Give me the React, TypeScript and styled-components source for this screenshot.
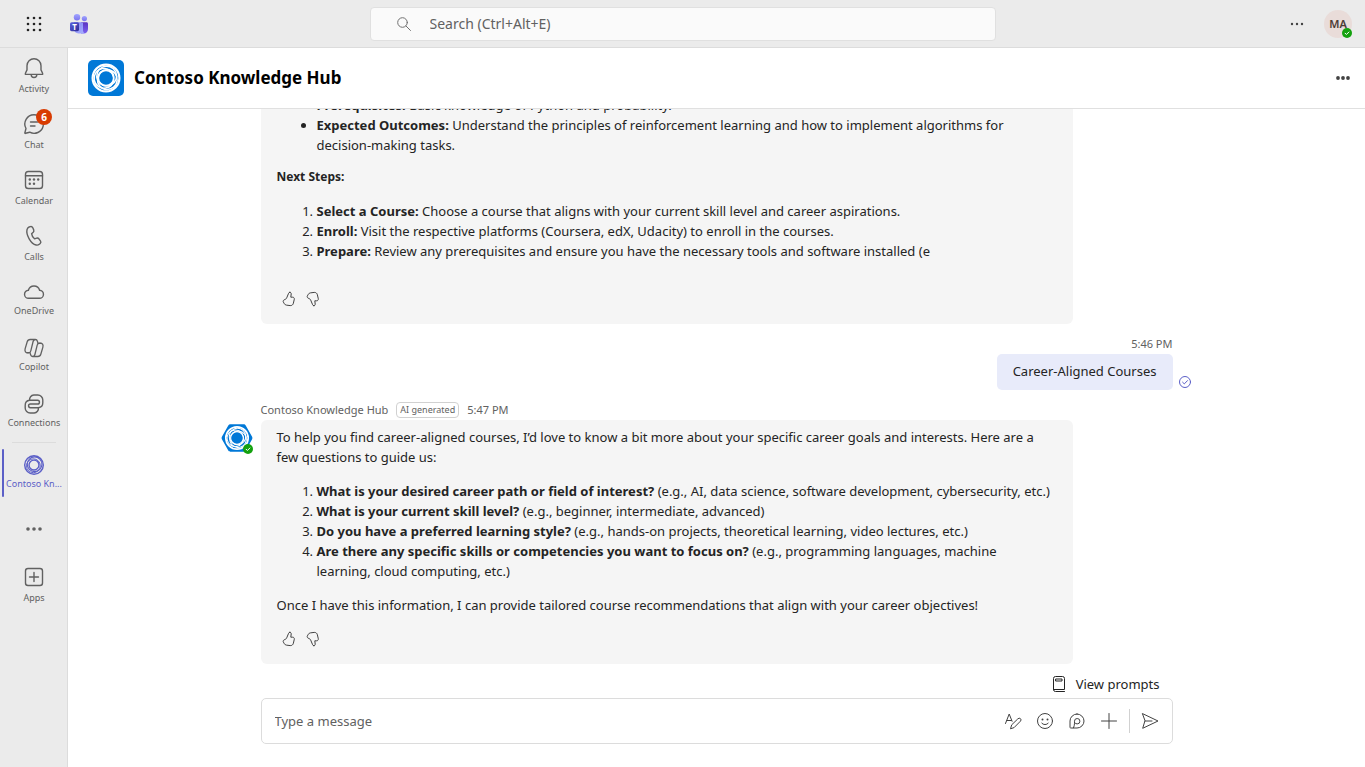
import React from "react";
import styled, { createGlobalStyle, css } from "styled-components";

const Global = createGlobalStyle`
  *, *::before, *::after { box-sizing: border-box; }
  body {
    margin: 0;
    background: #fff;
    color: #242424;
    font-family: "Segoe UI", "Noto Sans", "Open Sans", sans-serif;
    font-size: 13px;
    line-height: 20px;
  }
  button, input { font: inherit; color: inherit; }
`;

const plainButton = css`
  display: flex;
  align-items: center;
  justify-content: center;
  padding: 0;
  border: 0;
  background: none;
  cursor: pointer;
`;

/* ---------- shell ---------- */

const Shell = styled.div`
  display: grid;
  grid-template-columns: 68px minmax(0, 1fr);
  grid-template-rows: 48px minmax(0, 1fr);
  height: 100vh;
`;

const TopBar = styled.header`
  grid-column: 1 / -1;
  display: grid;
  grid-template-columns: 1fr minmax(0, 626px) 1fr;
  align-items: center;
  background: #ebebeb;
  border-bottom: 1px solid #dcdcdc;
`;

const TopStart = styled.div`
  display: flex;
  align-items: center;
  gap: 1px;
`;

const TopEnd = styled.div`
  display: flex;
  align-items: center;
  justify-content: flex-end;
  gap: 11px;
  padding-right: 13px;
`;

const IconButton = styled.button<{ $w?: number; $h?: number; $tone?: string }>`
  ${plainButton}
  width: ${p => p.$w ?? 32}px;
  height: ${p => p.$h ?? 32}px;
  color: ${p => p.$tone ?? "#424242"};
`;

const SearchBox = styled.label`
  display: flex;
  align-items: center;
  gap: 18px;
  height: 34px;
  padding-left: 25px;
  border: 1px solid #e0e0e0;
  border-radius: 4px;
  background: #fafafa;
  color: #707070;
`;

const SearchInput = styled.input`
  flex: 1;
  min-width: 0;
  padding: 0;
  border: 0;
  outline: 0;
  background: none;
  font-size: 14px;
  &::placeholder { color: #616161; opacity: 1; }
`;

const Profile = styled.button`
  ${plainButton}
  position: relative;
  width: 28px;
  height: 28px;
  border-radius: 50%;
  background: #e9dcd9;
  color: #4d3b36;
  font-size: 11px;
  font-weight: 600;
`;

const Presence = styled.span`
  position: absolute;
  right: 0;
  bottom: 0;
  display: flex;
  width: 10px;
  height: 10px;
`;

/* ---------- left rail ---------- */

const Rail = styled.nav`
  display: flex;
  flex-direction: column;
  background: #ebebeb;
  border-right: 1px solid #dcdcdc;
  overflow: hidden;
`;

const RailItem = styled.button<{ $active?: boolean; $tight?: boolean }>`
  ${plainButton}
  position: relative;
  flex-direction: column;
  justify-content: flex-start;
  gap: ${p => (p.$tight ? 0 : 2)}px;
  flex: none;
  height: 56px;
  padding: 8px 0 0 1px;
  color: ${p => (p.$active ? "#5b5fc7" : "#616161")};
  ${p => p.$active && css`
    &::before {
      content: "";
      position: absolute;
      left: 2px;
      top: 4px;
      width: 2px;
      height: 48px;
      border-radius: 1px;
      background: #5b5fc7;
    }
  `}
`;

const RailLabel = styled.span`
  font-size: 9px;
  line-height: 14px;
  white-space: nowrap;
`;

const RailRule = styled.hr`
  flex: none;
  width: 44px;
  height: 1px;
  margin: 2px auto;
  border: 0;
  background: #dcdcdc;
`;

const Badge = styled.span`
  position: absolute;
  top: 5px;
  left: 36px;
  width: 16px;
  height: 16px;
  border-radius: 50%;
  background: #d83b01;
  color: #fff;
  font-size: 10px;
  font-weight: 700;
  line-height: 16px;
  text-align: center;
`;

/* ---------- conversation ---------- */

const Main = styled.main`
  display: flex;
  flex-direction: column;
  min-width: 0;
  min-height: 0;
`;

const ChatHeader = styled.div`
  display: flex;
  align-items: center;
  gap: 10px;
  flex: none;
  height: 61px;
  padding: 0 6px 0 20px;
  border-bottom: 1px solid #e0e0e0;
`;

const ChatTitle = styled.h1`
  flex: 1;
  margin: 0;
  color: #000;
  font-size: 17px;
  line-height: 24px;
  font-weight: 700;
`;

const Thread = styled.section`
  flex: 1;
  display: flex;
  flex-direction: column;
  justify-content: flex-end;
  min-height: 0;
  overflow: hidden;
`;

const Column = styled.div`
  display: flex;
  flex-direction: column;
  gap: 12px;
  width: 100%;
  max-width: 992px;
  margin: 0 auto;
  padding: 0 40px 8px;
`;

const BotRow = styled.article`
  display: grid;
  grid-template-columns: 40px minmax(0, 812px);
  row-gap: 2px;
  margin-left: -40px;
`;

const Meta = styled.div`
  grid-column: 2;
  display: flex;
  align-items: center;
  height: 16px;
  color: #616161;
  font-size: 11px;
  line-height: 16px;
  white-space: nowrap;
`;

const Chip = styled.span`
  margin: 0 8px;
  padding: 0 3px;
  border: 1px solid #d1d1d1;
  border-radius: 4px;
  font-size: 9px;
  line-height: 14px;
`;

const BotAvatar = styled.div`
  grid-column: 1;
  position: relative;
  width: 32px;
  height: 32px;
  margin-top: 2px;
`;

const Bubble = styled.div`
  grid-column: 2;
  padding: 7px 16px 13px;
  border-radius: 6px;
  background: #f5f5f5;
  p { margin: 0 0 14px; }
  p:last-of-type { margin-bottom: 0; }
  h2 { margin: 0 0 14px; font-size: 12px; line-height: 20px; font-weight: 700; }
  ul, ol { margin: 0 0 14px; padding-left: 40px; }
  ul { margin-bottom: 12px; }
  strong { font-weight: 700; }
`;

const Feedback = styled.div<{ $gap: number }>`
  display: flex;
  margin-top: ${p => p.$gap}px;
`;

const OwnRow = styled.article`
  display: flex;
  flex-direction: column;
  align-items: flex-end;
  gap: 2px;
`;

const OwnLine = styled.div`
  display: flex;
  align-items: flex-end;
  gap: 6px;
  margin-right: -18px;
`;

const OwnBubble = styled.div`
  padding: 7px 16px 9px;
  border-radius: 5px;
  background: #e8ebfa;
`;

const Sent = styled.span`
  display: flex;
  height: 14px;
  color: #5b5fc7;
`;

const Footer = styled.div`
  display: flex;
  flex-direction: column;
  flex: none;
  gap: 2px;
  width: 100%;
  max-width: 992px;
  margin: 0 auto;
  padding: 0 40px 23px;
`;

const Prompts = styled.button`
  ${plainButton}
  align-self: flex-end;
  gap: 7px;
  height: 24px;
  margin-right: 13px;
`;

const Composer = styled.form`
  display: flex;
  align-items: center;
  height: 46px;
  padding: 0 6px 0 13px;
  border: 1px solid #dcdcdc;
  border-radius: 5px;
`;

const MessageInput = styled.input`
  flex: 1;
  min-width: 0;
  padding: 0;
  border: 0;
  outline: 0;
  background: none;
  &::placeholder { color: #616161; opacity: 1; }
`;

const Divider = styled.span`
  width: 1px;
  height: 24px;
  margin: 0 4px;
  background: #d1d1d1;
`;

/* ---------- drawings ---------- */

const Glyph = ({ size = 24, box = 24, w = 1.4, children }: { size?: number; box?: number; w?: number; children: React.ReactNode }) => (
  <svg width={size} height={size} viewBox={`0 0 ${box} ${box}`} fill="none" stroke="currentColor" strokeWidth={w} strokeLinecap="round" strokeLinejoin="round" aria-hidden="true">
    {children}
  </svg>
);

const Dots = ({ r = 1.6, step = 5 }: { r?: number; step?: number }) => (
  <svg width="20" height="20" viewBox="0 0 20 20" fill="currentColor" aria-hidden="true">
    <circle cx={10 - step} cy="10" r={r} />
    <circle cx="10" cy="10" r={r} />
    <circle cx={10 + step} cy="10" r={r} />
  </svg>
);

const Waffle = () => (
  <svg width="20" height="20" viewBox="0 0 20 20" fill="currentColor" aria-hidden="true">
    {[4, 10, 16].map(y => [4, 10, 16].map(x => <circle key={`${x}-${y}`} cx={x} cy={y} r="1.3" />))}
  </svg>
);

const TeamsLogo = () => (
  <svg width="20" height="20" viewBox="0 0 20 20" role="img" aria-label="Microsoft Teams">
    <defs>
      <linearGradient id="tmHead" x1="0" y1="0" x2="0" y2="1">
        <stop offset="0" stopColor="#a0a4ff" /><stop offset="1" stopColor="#7b74ee" />
      </linearGradient>
      <linearGradient id="tmBody" x1="0" y1="0" x2="1" y2="1">
        <stop offset="0" stopColor="#7f7ff2" /><stop offset="1" stopColor="#a9b2ff" />
      </linearGradient>
      <linearGradient id="tmSide" x1="0" y1="0" x2="0" y2="1">
        <stop offset="0" stopColor="#5b33c0" /><stop offset="1" stopColor="#7a62f0" />
      </linearGradient>
      <linearGradient id="tmTile" x1="0" y1="0" x2="1" y2="1">
        <stop offset="0" stopColor="#5a63e0" /><stop offset="1" stopColor="#2f2a93" />
      </linearGradient>
    </defs>
    <circle cx="15.4" cy="4.6" r="2.6" fill="url(#tmHead)" />
    <circle cx="8" cy="3.3" r="3.2" fill="url(#tmHead)" />
    <path d="M12 8.200h5.500c.9 0 1.500.7 1.500 1.500v5.200c0 2.600-1.800 4.500-4.200 4.500H12z" fill="url(#tmSide)" />
    <path d="M5 8.200h7.700c.8 0 1.300.6 1.300 1.300v6.300c0 1.800.5 2.900 1.500 3.600H9.500C7 19.400 5 17.500 5 15z" fill="url(#tmBody)" />
    <rect x="1" y="8.200" width="9" height="9" rx="1.600" fill="url(#tmTile)" />
    <text x="5.500" y="15.500" fill="#fff" fontSize="8" fontWeight="700" textAnchor="middle">T</text>
  </svg>
);

const Swirl = ({ color, ring = 1.3 }: { color: string; ring?: number }) => (
  <g fill="none" stroke={color}>
    <circle cx="18" cy="18" r="13.400" strokeWidth={ring + 0.700} />
    {[20, 140, 260].map(a => (
      <circle key={a} cx="18" cy="16" r="9.900" strokeWidth={ring} transform={`rotate(${a} 18 18)`} />
    ))}
    <circle cx="18" cy="18" r="7.600" strokeWidth={ring} />
  </g>
);

const HubLogo = () => (
  <svg width="36" height="36" viewBox="0 0 36 36" aria-hidden="true">
    <rect width="36" height="36" rx="5" fill="#0078d7" />
    <Swirl color="#fff" ring={1.500} />
  </svg>
);

const HubHex = () => (
  <svg width="32" height="32" viewBox="0 0 36 36" aria-hidden="true">
    <path d="M10.500 2.500h15c1 0 1.800.4 2.300 1.300l7.200 12.700c.5 1 .5 2 0 3l-7.200 12.700c-.5.9-1.300 1.300-2.300 1.300h-15c-1 0-1.800-.4-2.300-1.300L1 19.500c-.5-1-.5-2 0-3L8.200 3.800c.5-.9 1.300-1.300 2.300-1.300z" fill="#0078d7" />
    <g transform="translate(18 18) scale(0.94) translate(-18 -18)"><Swirl color="#fff" /></g>
  </svg>
);

const HubRail = () => (
  <svg width="24" height="24" viewBox="2 2 32 32" aria-hidden="true">
    <g fill="none" stroke="currentColor">
      <circle cx="18" cy="18" r="12.400" strokeWidth="1.900" />
      <circle cx="18.800" cy="17" r="9.800" strokeWidth="1.500" />
      <circle cx="17.200" cy="19" r="9.200" strokeWidth="1.300" />
      <circle cx="18" cy="18" r="6.600" strokeWidth="1.800" />
    </g>
  </svg>
);

const Available = () => (
  <Presence>
    <svg width="10" height="10" viewBox="0 0 10 10" role="img" aria-label="Available">
      <circle cx="5" cy="5" r="5" fill="#13a10e" />
      <path d="M3.100 5.200l1.300 1.300 2.500-2.500" fill="none" stroke="#fff" strokeWidth="1" strokeLinecap="round" strokeLinejoin="round" />
    </svg>
  </Presence>
);

const Bell = () => (
  <Glyph>
    <path d="M12 2.700a7 7 0 0 1 7 7v4.200l1.700 3.600a.6.6 0 0 1-.5.900H3.800a.6.6 0 0 1-.5-.9L5 13.900V9.700a7 7 0 0 1 7-7z" />
    <path d="M9.200 18.700a2.800 2.800 0 0 0 5.600 0" />
  </Glyph>
);
const Chat = () => (
  <Glyph>
    <path d="M12 2.700a9.300 9.300 0 1 1-4.300 17.500l-4.100 1.100a.5.5 0 0 1-.7-.7L4 16.500A9.300 9.300 0 0 1 12 2.700z" />
    <path d="M8.500 10h7M8.500 14h4.500" />
  </Glyph>
);
const Calendar = () => (
  <Glyph>
    <rect x="3.500" y="3.500" width="17" height="17" rx="2.800" />
    <path d="M3.500 7.700h17" />
    <g fill="currentColor" stroke="none">
      {[[7.800, 11.500], [12, 11.500], [16.200, 11.500], [7.800, 15.800], [12, 15.800]].map(([x, y]) => <circle key={`${x}-${y}`} cx={x} cy={y} r="1.200" />)}
    </g>
  </Glyph>
);
const Call = () => (
  <Glyph>
    <path d="M7.100 3l1.200-.4c1-.3 2 .2 2.500 1.200l.9 2.100c.3.800.1 1.700-.5 2.300L9.600 9.700c.2 1.600 1.700 4.200 2.900 5.100l2.200-.7c.8-.2 1.700.1 2.200.7l1.500 2c.6.8.5 1.900-.2 2.600l-.9.8c-.9.8-2.100 1.100-3.200.8C8.800 19.800 3.900 10.800 5 5.700 5.300 4.400 6 3.400 7.100 3z" />
  </Glyph>
);
const Cloud = () => (
  <Glyph>
    <path d="M6.700 18.300a4 4 0 0 1-.3-8 5.800 5.800 0 0 1 11.200 0 4 4 0 0 1-.3 8z" />
  </Glyph>
);
const Copilot = () => {
  const half = "M19.200 7.400H16l-.6-2.200c-.3-1-1-1.700-2-1.700H8.200C6.700 3.500 5.600 4.400 5.200 5.800L3.100 12.900c-.6 2.300.6 4 2.800 4h.6c1.200 0 2-.8 2.300-2L11.100 5.500c.3-1.200 1-2 2.300-2";
  return (
    <Glyph w={1.300}>
      <path d={half} />
      <path d={half} transform="rotate(180 12 12)" />
    </Glyph>
  );
};
const Connections = () => (
  <Glyph>
    <path d="M16.400 15.700a5 5 0 0 0 4.400-5V8a5 5 0 0 0-5-5h-4a4.600 4.600 0 0 0-4.200 5.300" />
    <path d="M7.600 8.300a5 5 0 0 0-4.400 5V16a5 5 0 0 0 5 5h4a4.600 4.600 0 0 0 4.200-5.300" />
    <path d="M7.600 8.300h8a1.850 1.850 0 0 1 0 3.700H8.400a1.850 1.850 0 0 0 0 3.700h8" />
  </Glyph>
);
const Apps = () => (
  <Glyph>
    <rect x="3.500" y="3.500" width="17" height="17" rx="2.500" />
    <path d="M12 7.500v9M7.500 12h9" />
  </Glyph>
);

const thumb = "M8.800 1.300c1 0 1.500.8 1.400 1.700L9.800 6.200h1.900c1.100 0 1.800 1 1.600 2l-.9 4c-.3 1.500-1.700 2.600-3.200 2.400l-3.900-.5c-.8-.1-1.500-.6-1.900-1.300l-1-1.700c-.5-.8-.1-1.800.7-2.200l1.300-.6c.6-.3 1.100-.8 1.300-1.400l1.900-4.600c.2-.6.700-1 1.300-1z";
const ThumbUp = () => <Glyph size={16} box={16} w={1}><path d={thumb} /></Glyph>;
const ThumbDown = () => <Glyph size={16} box={16} w={1}><path d={thumb} transform="matrix(1 0 0 -1 0 16)" /></Glyph>;

const SearchIcon = () => <Glyph size={16} box={16} w={1}><circle cx="6.500" cy="6.500" r="4.800" /><path d="M10 10l4.500 4.500" /></Glyph>;
const SentIcon = () => <Glyph size={12} box={12} w={1}><circle cx="6" cy="6" r="5.500" /><path d="M3.600 6.200l1.700 1.700 3.200-3.300" /></Glyph>;
const BookIcon = () => <Glyph size={20} box={20} w={1}><path d="M4.500 15.500v-11a2 2 0 0 1 2-2h7a2 2 0 0 1 2 2v11h-11a2 2 0 0 0 2 2h9" /><rect x="7" y="5" width="6" height="2" /></Glyph>;
const FormatIcon = () => <Glyph size={20} box={20} w={1}><path d="M2.500 12.500l3.700-9.500 2.900 7.300M3.800 9.500h4.600" /><path d="M15 7.700a1.700 1.700 0 0 1 2.500 2.400l-6.400 6.500-3.600 1.200 1.100-3.600z" /></Glyph>;
const EmojiIcon = () => <Glyph size={20} box={20} w={1}><circle cx="10" cy="10" r="7.500" /><path d="M6.800 12.200a4.100 4.100 0 0 0 6.400 0" /><g fill="currentColor" stroke="none"><circle cx="7.500" cy="8.500" r="1" /><circle cx="12.500" cy="8.500" r="1" /></g></Glyph>;
const LoopIcon = () => <Glyph size={20} box={20} w={1}><path d="M10 3a7 7 0 1 1 0 14H3.700a.7.700 0 0 1-.7-.7V10a7 7 0 0 1 7-7z" /><path d="M6.500 16.800c.6-1.300 1-2.900 1-4.600v-2a2.700 2.700 0 1 1 2.700 2.700c-1 0-1.700-.4-2.300-1" /></Glyph>;
const PlusIcon = () => <Glyph size={20} box={20} w={1}><path d="M10 2.500v15M2.500 10h15" /></Glyph>;
const SendIcon = () => <Glyph size={20} box={20} w={1}><path d="M2.700 2.700L18 10 2.700 17.300 4.900 10z" /><path d="M4.900 10H12" /></Glyph>;

/* ---------- content ---------- */

const railItems = [
  { label: "Activity", icon: <Bell /> },
  { label: "Chat", icon: <Chat />, badge: "6" },
  { label: "Calendar", icon: <Calendar /> },
  { label: "Calls", icon: <Call /> },
  { label: "OneDrive", icon: <Cloud />, tight: true },
  { label: "Copilot", icon: <Copilot />, tight: true },
  { label: "Connections", icon: <Connections />, tight: true },
];

const nextSteps = [
  ["Select a Course:", "Choose a course that aligns with your current skill level and career aspirations."],
  ["Enroll:", "Visit the respective platforms (Coursera, edX, Udacity) to enroll in the courses."],
  ["Prepare:", "Review any prerequisites and ensure you have the necessary tools and software installed (e"],
];

const FeedbackButtons = ({ gap }: { gap: number }) => (
  <Feedback $gap={gap}>
    <IconButton $w={24} $h={24} aria-label="Like"><ThumbUp /></IconButton>
    <IconButton $w={24} $h={24} aria-label="Dislike"><ThumbDown /></IconButton>
  </Feedback>
);

export default function App() {
  return (
    <>
      <Global />
      <Shell>
        <TopBar>
          <TopStart>
            <IconButton $w={68} $tone="#242424" aria-label="App launcher"><Waffle /></IconButton>
            <TeamsLogo />
          </TopStart>
          <SearchBox>
            <SearchIcon />
            <SearchInput type="search" aria-label="Search" placeholder="Search (Ctrl+Alt+E)" />
          </SearchBox>
          <TopEnd>
            <IconButton aria-label="Settings and more"><Dots r={1.200} /></IconButton>
            <Profile aria-label="Profile">MA<Available /></Profile>
          </TopEnd>
        </TopBar>

        <Rail aria-label="Apps">
          {railItems.map(item => (
            <RailItem key={item.label} $tight={item.tight}>
              {item.icon}
              <RailLabel>{item.label}</RailLabel>
              {item.badge && <Badge>{item.badge}</Badge>}
            </RailItem>
          ))}
          <RailRule />
          <RailItem $active $tight>
            <HubRail />
            <RailLabel>Contoso Kn...</RailLabel>
          </RailItem>
          <IconButton $w={68} $h={56} $tone="#616161" aria-label="More apps"><Dots r={1.800} step={6} /></IconButton>
          <RailItem>
            <Apps />
            <RailLabel>Apps</RailLabel>
          </RailItem>
        </Rail>

        <Main>
          <ChatHeader>
            <HubLogo />
            <ChatTitle>Contoso Knowledge Hub</ChatTitle>
            <IconButton aria-label="More options"><Dots r={1.900} /></IconButton>
          </ChatHeader>

          <Thread>
            <Column>
              <BotRow>
                <Bubble>
                  <ul>
                    <li><strong>Prerequisites:</strong> Basic knowledge of Python and probability.</li>
                    <li>
                      <strong>Expected Outcomes:</strong> Understand the principles of reinforcement learning and how to implement algorithms for<br />
                      decision-making tasks.
                    </li>
                  </ul>
                  <h2>Next Steps:</h2>
                  <ol>
                    {nextSteps.map(([head, text]) => <li key={head}><strong>{head}</strong> {text}</li>)}
                  </ol>
                  <FeedbackButtons gap={26} />
                </Bubble>
              </BotRow>

              <OwnRow>
                <Meta>5:46 PM</Meta>
                <OwnLine>
                  <OwnBubble>Career-Aligned Courses</OwnBubble>
                  <Sent role="img" aria-label="Sent"><SentIcon /></Sent>
                </OwnLine>
              </OwnRow>

              <BotRow>
                <Meta>Contoso Knowledge Hub<Chip>AI generated</Chip>5:47 PM</Meta>
                <BotAvatar><HubHex /><Available /></BotAvatar>
                <Bubble>
                  <p>
                    To help you find career-aligned courses, I’d love to know a bit more about your specific career goals and interests. Here are a
                    few questions to guide us:
                  </p>
                  <ol>
                    <li><strong>What is your desired career path or field of interest?</strong> (e.g., AI, data science, software development, cybersecurity, etc.)</li>
                    <li><strong>What is your current skill level?</strong> (e.g., beginner, intermediate, advanced)</li>
                    <li><strong>Do you have a preferred learning style?</strong> (e.g., hands-on projects, theoretical learning, video lectures, etc.)</li>
                    <li>
                      <strong>Are there any specific skills or competencies you want to focus on?</strong> (e.g., programming languages, machine<br />
                      learning, cloud computing, etc.)
                    </li>
                  </ol>
                  <p>Once I have this information, I can provide tailored course recommendations that align with your career objectives!</p>
                  <FeedbackButtons gap={12} />
                </Bubble>
              </BotRow>
            </Column>
          </Thread>

          <Footer>
            <Prompts><BookIcon />View prompts</Prompts>
            <Composer onSubmit={e => e.preventDefault()}>
              <MessageInput type="text" aria-label="Message" placeholder="Type a message" />
              <IconButton type="button" aria-label="Format"><FormatIcon /></IconButton>
              <IconButton type="button" aria-label="Emoji"><EmojiIcon /></IconButton>
              <IconButton type="button" aria-label="Loop components"><LoopIcon /></IconButton>
              <IconButton type="button" aria-label="Actions and apps"><PlusIcon /></IconButton>
              <Divider />
              <IconButton type="submit" aria-label="Send"><SendIcon /></IconButton>
            </Composer>
          </Footer>
        </Main>
      </Shell>
    </>
  );
}
